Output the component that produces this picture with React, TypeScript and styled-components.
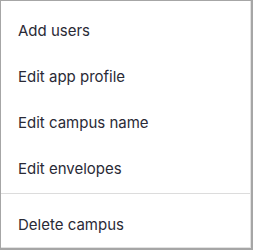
import React from "react";
import styled, { createGlobalStyle } from "styled-components";

const GlobalStyle = createGlobalStyle`
    html, body {
        margin: 0;
        padding: 0;
        background: #ffffff;
    }
`;

const Menu = styled.div`
    box-sizing: border-box;
    width: 253px;
    height: 250px;
    background: #ffffff;
    border-style: solid;
    border-color: #a6a6a6;
    border-width: 1px 2px 2px 1px;
    box-shadow: inset -1px -1px 0 #e2e2e2;
    font-family: Inter, "Noto Sans", sans-serif;
    overflow: hidden;
`;

const Group = styled.div<{ $top: number; $bottom: number }>`
    display: flex;
    flex-direction: column;
    padding: ${({ $top }) => $top}px 0 ${({ $bottom }) => $bottom}px;
`;

const Divider = styled.div`
    height: 1px;
    background: #dcdcdc;
    margin-right: 1px;
`;

const Item = styled.div`
    height: 46px;
    display: flex;
    align-items: center;
    padding-left: 17px;
    font-size: 15px;
    color: #2a2a36;
    cursor: pointer;

    &:hover {
        background: #f4f4f6;
    }
`;

const main = ["Add users", "Edit app profile", "Edit campus name", "Edit envelopes"];

const App: React.FC = () => {
    return (
        <>
            <GlobalStyle />
            <Menu>
                <Group $top={6} $bottom={2}>
                    {main.map((label) => (
                        <Item key={label}>{label}</Item>
                    ))}
                </Group>
                <Divider />
                <Group $top={7} $bottom={0}>
                    <Item>Delete campus</Item>
                </Group>
            </Menu>
        </>
    );
};

export default App;
